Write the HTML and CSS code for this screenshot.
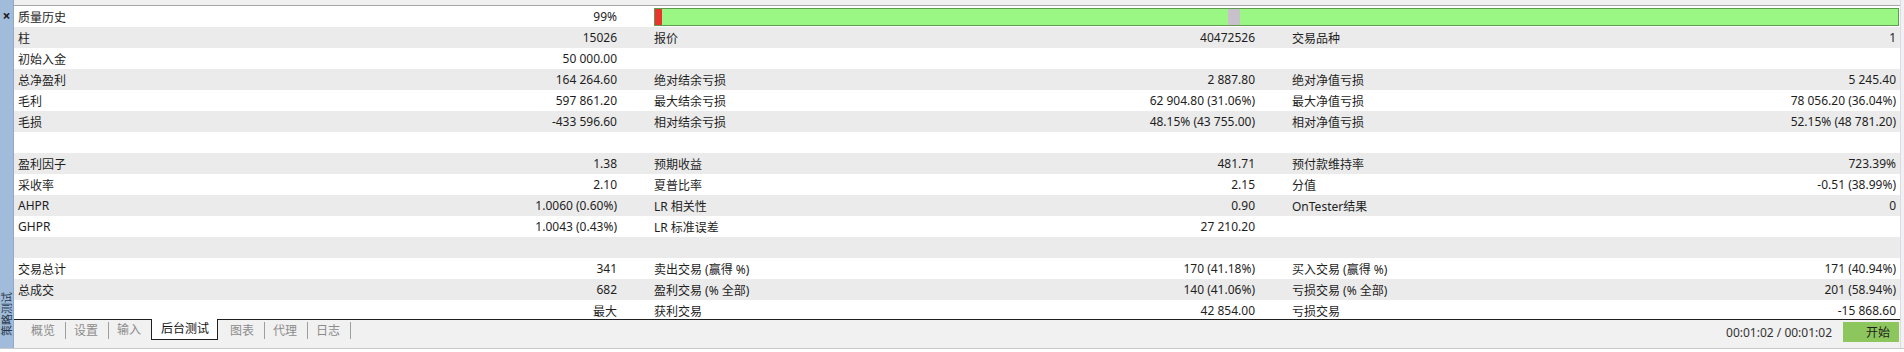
FILE: index.html
```html
<!DOCTYPE html>
<html lang="zh-CN">
<head>
  <meta charset="UTF-8">
  <title>策略测试 - 后台测试</title>
  <link rel="stylesheet" href="styles.css">
</head>
<body>
  <div class="tester">
    <aside class="side">
      <span class="close">&times;</span>
      <span class="side-title">策略测试</span>
    </aside>

    <div class="main">
      <div class="top-strip"></div>

      <div class="report">
        <div class="row">
          <div class="pair"><span class="lbl">质量历史</span><span class="val">99%</span></div>
          <div class="quality">
            <span class="seg bad"></span>
            <span class="seg good first"></span>
            <span class="seg gap"></span>
            <span class="seg good rest"></span>
          </div>
        </div>
        <div class="row">
          <div class="pair"><span class="lbl">柱</span><span class="val">15026</span></div>
          <div class="pair"><span class="lbl">报价</span><span class="val">40472526</span></div>
          <div class="pair last"><span class="lbl">交易品种</span><span class="val">1</span></div>
        </div>
        <div class="row">
          <div class="pair"><span class="lbl">初始入金</span><span class="val">50 000.00</span></div>
          <div class="pair"></div>
          <div class="pair last"></div>
        </div>
        <div class="row">
          <div class="pair"><span class="lbl">总净盈利</span><span class="val">164 264.60</span></div>
          <div class="pair"><span class="lbl">绝对结余亏损</span><span class="val">2 887.80</span></div>
          <div class="pair last"><span class="lbl">绝对净值亏损</span><span class="val">5 245.40</span></div>
        </div>
        <div class="row">
          <div class="pair"><span class="lbl">毛利</span><span class="val">597 861.20</span></div>
          <div class="pair"><span class="lbl">最大结余亏损</span><span class="val">62 904.80 (31.06%)</span></div>
          <div class="pair last"><span class="lbl">最大净值亏损</span><span class="val">78 056.20 (36.04%)</span></div>
        </div>
        <div class="row">
          <div class="pair"><span class="lbl">毛损</span><span class="val">-433 596.60</span></div>
          <div class="pair"><span class="lbl">相对结余亏损</span><span class="val">48.15% (43 755.00)</span></div>
          <div class="pair last"><span class="lbl">相对净值亏损</span><span class="val">52.15% (48 781.20)</span></div>
        </div>
        <div class="row"></div>
        <div class="row">
          <div class="pair"><span class="lbl">盈利因子</span><span class="val">1.38</span></div>
          <div class="pair"><span class="lbl">预期收益</span><span class="val">481.71</span></div>
          <div class="pair last"><span class="lbl">预付款维持率</span><span class="val">723.39%</span></div>
        </div>
        <div class="row">
          <div class="pair"><span class="lbl">采收率</span><span class="val">2.10</span></div>
          <div class="pair"><span class="lbl">夏普比率</span><span class="val">2.15</span></div>
          <div class="pair last"><span class="lbl">分值</span><span class="val">-0.51 (38.99%)</span></div>
        </div>
        <div class="row">
          <div class="pair"><span class="lbl">AHPR</span><span class="val">1.0060 (0.60%)</span></div>
          <div class="pair"><span class="lbl">LR 相关性</span><span class="val">0.90</span></div>
          <div class="pair last"><span class="lbl">OnTester结果</span><span class="val">0</span></div>
        </div>
        <div class="row">
          <div class="pair"><span class="lbl">GHPR</span><span class="val">1.0043 (0.43%)</span></div>
          <div class="pair"><span class="lbl">LR 标准误差</span><span class="val">27 210.20</span></div>
          <div class="pair last"></div>
        </div>
        <div class="row"></div>
        <div class="row">
          <div class="pair"><span class="lbl">交易总计</span><span class="val">341</span></div>
          <div class="pair"><span class="lbl">卖出交易 (赢得 %)</span><span class="val">170 (41.18%)</span></div>
          <div class="pair last"><span class="lbl">买入交易 (赢得 %)</span><span class="val">171 (40.94%)</span></div>
        </div>
        <div class="row">
          <div class="pair"><span class="lbl">总成交</span><span class="val">682</span></div>
          <div class="pair"><span class="lbl">盈利交易 (% 全部)</span><span class="val">140 (41.06%)</span></div>
          <div class="pair last"><span class="lbl">亏损交易 (% 全部)</span><span class="val">201 (58.94%)</span></div>
        </div>
        <div class="row">
          <div class="pair"><span class="lbl"></span><span class="val">最大</span></div>
          <div class="pair"><span class="lbl">获利交易</span><span class="val">42 854.00</span></div>
          <div class="pair last"><span class="lbl">亏损交易</span><span class="val">-15 868.60</span></div>
        </div>
      </div>

      <div class="tabbar">
        <nav class="tabs">
          <span class="tab sep">概览</span>
          <span class="tab sep">设置</span>
          <span class="tab">输入</span>
          <span class="tab active">后台测试</span>
          <span class="tab sep after-active">图表</span>
          <span class="tab sep">代理</span>
          <span class="tab sep">日志</span>
        </nav>
        <div class="status">
          <span class="time">00:01:02 / 00:01:02</span>
          <button class="start-btn">开始</button>
        </div>
      </div>
    </div>

    <div class="edge"></div>
  </div>
</body>
</html>
```

FILE: styles.css
```css
body {
  margin: 0;
  background: #fff;
  font-family: "Noto Sans", "Noto Sans CJK SC", sans-serif;
  font-size: 12px;
  color: #1e1e1e;
}

.tester {
  display: flex;
  height: 348px;
  border-bottom: 1px solid #c9c9c9;
  overflow: hidden;
}

/* left docking strip */
.side {
  width: 14px;
  flex: none;
  background: #a1bcda;
  border-right: 1px solid #8fa9c8;
  display: flex;
  flex-direction: column;
  align-items: center;
  justify-content: space-between;
  padding: 9px 0 12px;
  box-sizing: border-box;
}
.close { font-size: 14px; line-height: 14px; font-weight: bold; color: #1b1b1b; }
.side-title {
  writing-mode: vertical-rl;
  text-orientation: sideways;
  transform: rotate(180deg);
  font-size: 11px;
  line-height: 12px;
  color: #2a3a4e;
}

.main { flex: 1; display: flex; flex-direction: column; min-width: 0; }

.top-strip { height: 5px; background: #f0f0f0; border-bottom: 1px solid #a6a6a6; flex: none; }

.report { height: 313px; overflow: hidden; flex: none; }
.row {
  height: 21px;
  display: grid;
  grid-template-columns: 636px 638px 1fr;
  align-items: center;
  background: #fff;
}
.row:nth-child(even) { background: #ebebeb; }

.pair {
  display: flex;
  justify-content: space-between;
  padding: 0 33px 0 4px;
  white-space: nowrap;
}
.pair.last { padding-right: 4px; }

/* history quality bar */
.quality {
  grid-column: 2 / 4;
  margin: 0 1px 0 4px;
  height: 18px;
  box-sizing: border-box;
  border: 1px solid #5f9a4f;
  display: flex;
}
.seg { height: 100%; }
.seg.bad { width: 7px; background: #e8352d; }
.seg.good { background: #9bf784; }
.seg.first { width: 566px; }
.seg.gap { width: 12px; background: #c8c0ca; }
.seg.rest { flex: 1; }

/* bottom tabs */
.tabbar {
  flex: 1;
  display: flex;
  justify-content: space-between;
  align-items: flex-start;
  background: #f1f1f1;
  border-top: 1px solid #1f1f1f;
}
.tabs { display: flex; padding-left: 9px; }
.tab {
  height: 20px;
  line-height: 20px;
  padding: 0 10px 0 8px;
  color: #8c8c8c;
}
.tab.sep { border-right: 1px solid #9e9e9e; height: 17px; margin-top: 2px; line-height: 17px; }
.tab.active {
  margin-top: -1px;
  height: 21px;
  padding: 0 8px 0 9px;
  background: #fff;
  color: #111;
  border: 1px solid #1f1f1f;
  border-top: none;
  box-sizing: border-box;
}
.tab.after-active { padding-left: 12px; }

.status { display: flex; align-items: center; gap: 11px; padding: 2px 1px 0 0; }
.time { color: #333; }
.start-btn {
  width: 56px;
  height: 20px;
  border: none;
  background: #8cc65c;
  font-family: inherit;
  font-size: 12px;
  color: #1e1e1e;
  text-align: right;
  padding: 0 9px 0 0;
}

.edge { width: 3px; flex: none; background: #f2f0f4; border-left: 1px solid #dcdcdc; }
```
